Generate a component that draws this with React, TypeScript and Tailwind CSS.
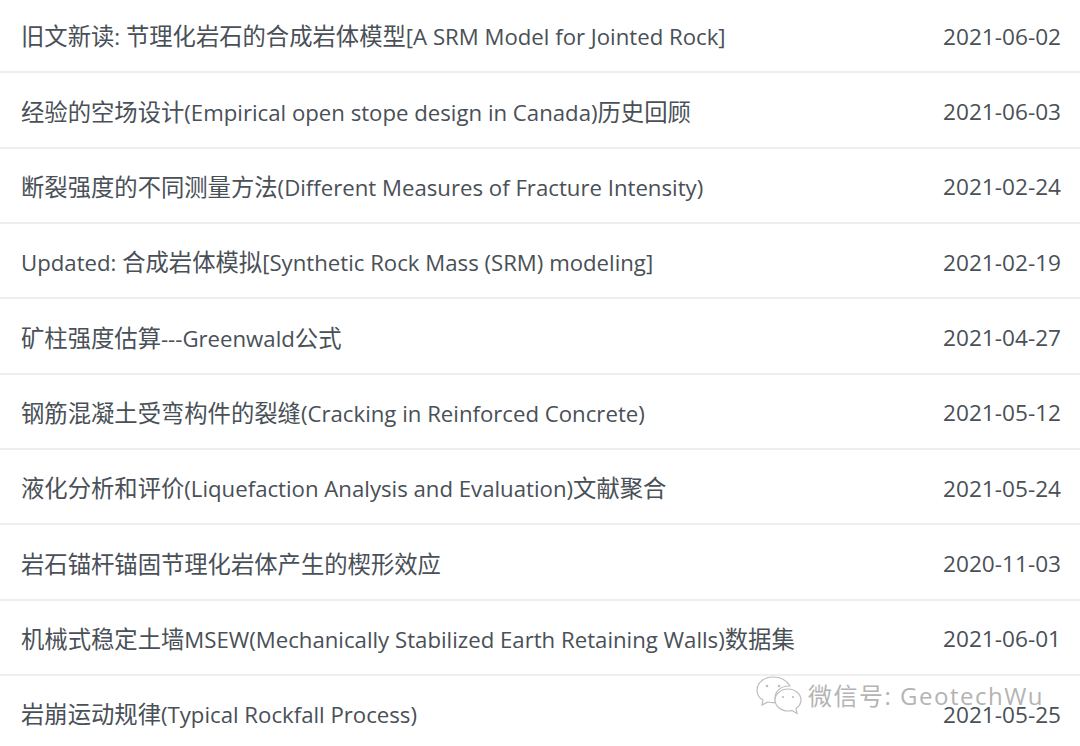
const rows = [
  ['旧文新读: 节理化岩石的合成岩体模型[A SRM Model for Jointed Rock]', '2021-06-02'],
  ['经验的空场设计(Empirical open stope design in Canada)历史回顾', '2021-06-03'],
  ['断裂强度的不同测量方法(Different Measures of Fracture Intensity)', '2021-02-24'],
  ['Updated: 合成岩体模拟[Synthetic Rock Mass (SRM) modeling]', '2021-02-19'],
  ['矿柱强度估算---Greenwald公式', '2021-04-27'],
  ['钢筋混凝土受弯构件的裂缝(Cracking in Reinforced Concrete)', '2021-05-12'],
  ['液化分析和评价(Liquefaction Analysis and Evaluation)文献聚合', '2021-05-24'],
  ['岩石锚杆锚固节理化岩体产生的楔形效应', '2020-11-03'],
  ['机械式稳定土墙MSEW(Mechanically Stabilized Earth Retaining Walls)数据集', '2021-06-01'],
  ['岩崩运动规律(Typical Rockfall Process)', '2021-05-25'],
];

// the Chinese runs sit a little larger than the Latin ones in the picture
function Title({ text }: { text: string }) {
  const parts = text.split(/([\u4e00-\u9fff]+)/).filter(Boolean);
  return (
    <span className="whitespace-nowrap text-[22.2px]">
      {parts.map((part, i) =>
        /[\u4e00-\u9fff]/.test(part) ? (
          <span key={i} className="text-[23.33px]">{part}</span>
        ) : (
          <span key={i}>{part}</span>
        ),
      )}
    </span>
  );
}

function Watermark() {
  return (
    <div className="absolute left-[756px] top-[676px] flex items-center gap-[6px] text-[#b4b4b4]">
      <svg width="46" height="40" viewBox="0 0 46 40" fill="#ffffff" stroke="#bdbdbd" strokeWidth="1.2">
        <path d="M17 1C8 1 1 7 1 14c0 4 2 8 6 10l-1 5 6-3c2 .5 3 .7 5 .7 1 0 2 0 3-.2-.6-1.500-1-3-1-4.500 0-7 6-12 14-12h1C31 5 25 1 17 1z" />
        <path d="M45 24c0-6-6-11-13-11s-13 5-13 11 6 11 13 11c1.500 0 3-.2 4-.6l5 3-1-5c3-2 5-5 5-8.400z" />
        <circle cx="11" cy="10" r="1.300" fill="#bdbdbd" stroke="none" />
        <circle cx="23" cy="10" r="1.300" fill="#bdbdbd" stroke="none" />
        <circle cx="27" cy="21" r="1.100" fill="#bdbdbd" stroke="none" />
        <circle cx="37" cy="21" r="1.100" fill="#bdbdbd" stroke="none" />
      </svg>
      <span className="whitespace-nowrap text-[24px] tracking-[1.5px] [text-shadow:1px_1px_0_#ffffff]">微信号: GeotechWu</span>
    </div>
  );
}

export default function App() {
  return (
    <div className="relative h-[746px] w-[1080px] overflow-hidden bg-white text-[#495057] [font-family:'Open_Sans','Noto_Sans_CJK_SC',sans-serif]">
      <Watermark />
      <ul className="relative -mt-[2px]">
        {rows.map(([title, date]) => (
          <li key={date} className="flex h-[75.35px] items-center justify-between border-b-2 border-[#eeeeee] pl-[21px] pr-[19px] pt-[4px] last:border-transparent">
            <Title text={title} />
            <span className="whitespace-nowrap text-[22.6px]">{date}</span>
          </li>
        ))}
      </ul>
    </div>
  );
}
